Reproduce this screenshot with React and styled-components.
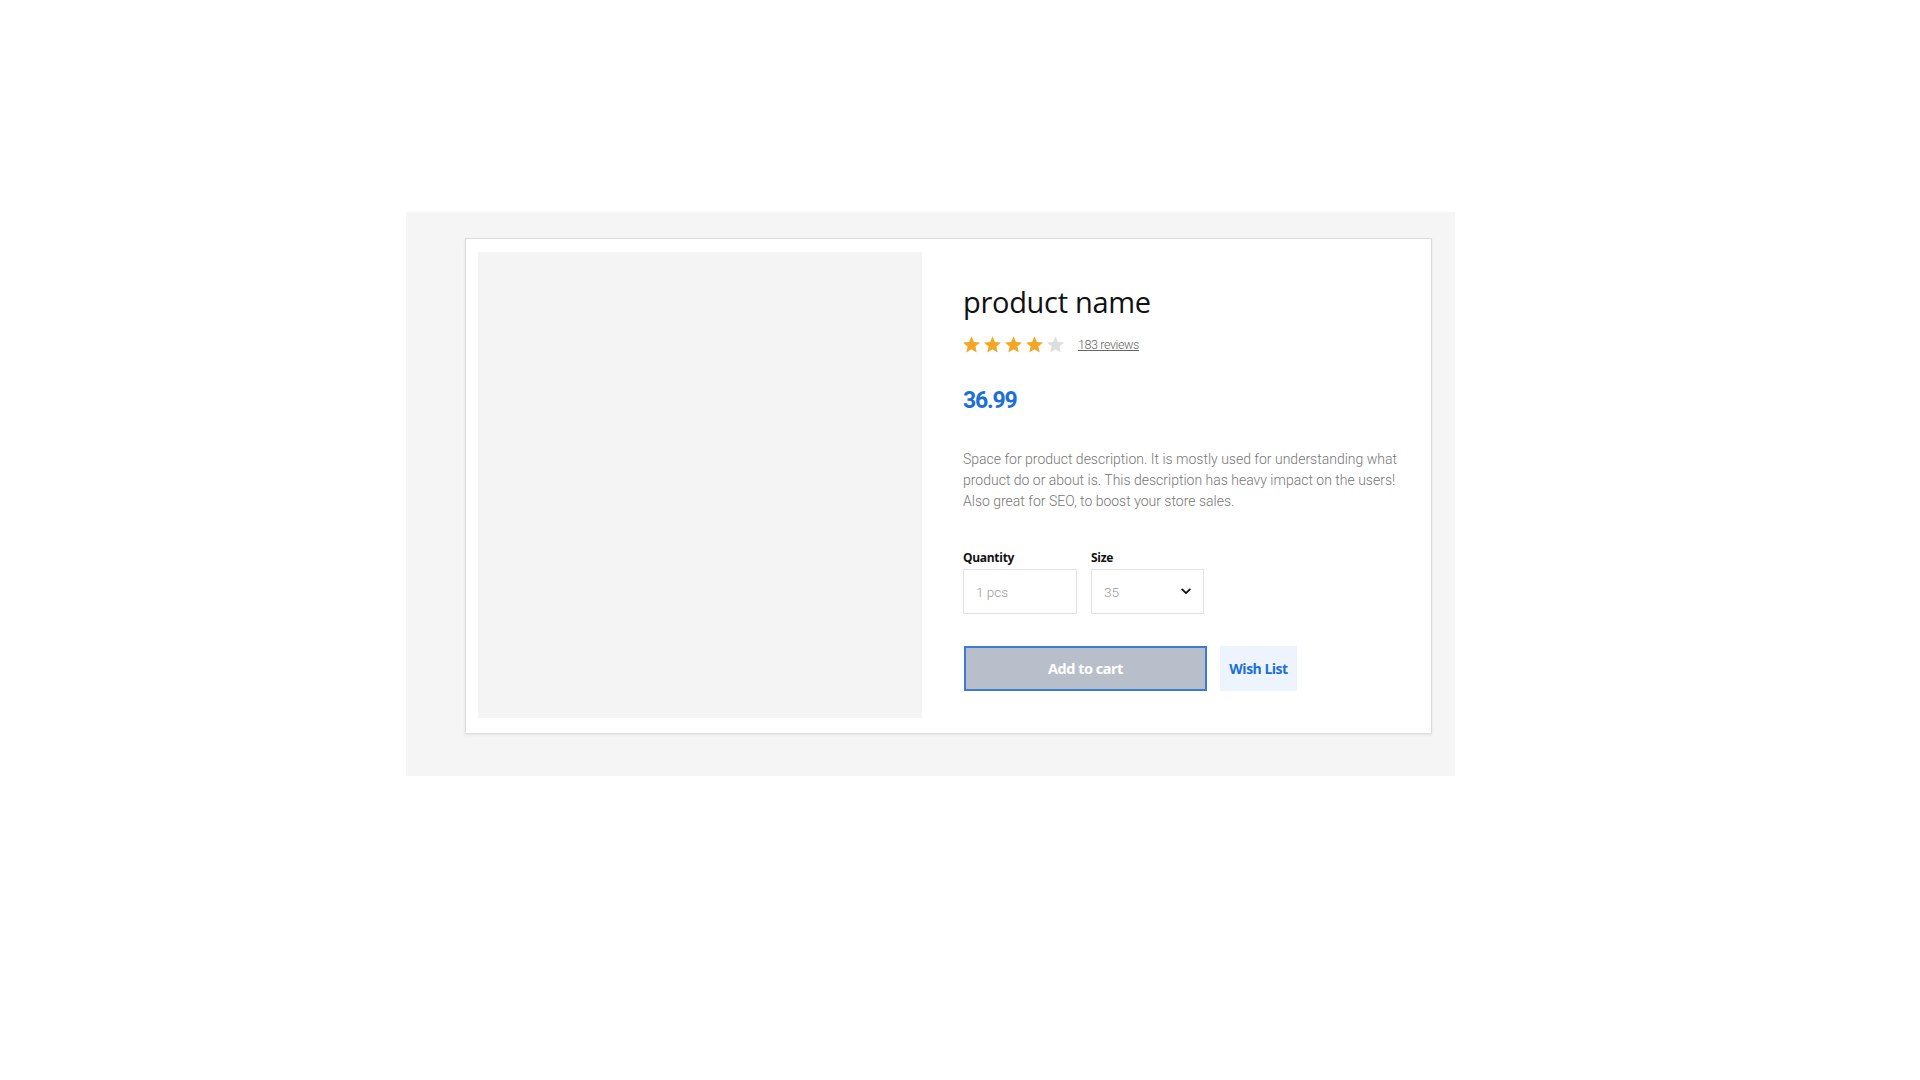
import React from "react";
import styled, { createGlobalStyle } from "styled-components";

const GlobalStyle = createGlobalStyle`
  html, body { margin: 0; padding: 0; background: #ffffff; }
  body { font-family: "Open Sans", "Liberation Sans", sans-serif; }
  * { box-sizing: border-box; }
`;

const Page = styled.div`
  padding: 212px 0 0 406px;
`;

const Frame = styled.section`
  width: 1049px;
  height: 564px;
  background: #f5f5f5;
  padding: 26px 23px 0 59px;
`;

const Card = styled.article`
  width: 967px;
  height: 496px;
  background: #ffffff;
  border: 1px solid #dcdcdc;
  box-shadow: 0 1px 3px rgba(0, 0, 0, 0.07);
  padding: 13px 12px 14px;
  display: flex;
`;

const ImageBox = styled.div`
  width: 444px;
  height: 466px;
  flex: none;
  background: #f4f4f4;
`;

const Info = styled.div`
  flex: 1;
  padding-left: 41px;
  display: flex;
  flex-direction: column;
  align-items: flex-start;
`;

const Title = styled.h1`
  margin: 32px 0 0;
  font-family: "Open Sans", sans-serif;
  font-weight: 500;
  font-size: 29px;
  line-height: 36px;
  color: #111111;
  letter-spacing: -0.3px;
`;

const RatingRow = styled.div`
  margin-top: 16px;
  display: flex;
  align-items: center;
  height: 17px;
`;

const Stars = styled.div`
  display: flex;
  gap: 4px;
  margin-right: 14px;
`;

const Reviews = styled.a`
  font-family: "Roboto", sans-serif;
  font-weight: 300;
  font-size: 12.5px;
  color: #666666;
  text-decoration: underline;
  letter-spacing: -0.4px;
  cursor: pointer;
`;

const Price = styled.div`
  margin-top: 34px;
  font-family: "Roboto", sans-serif;
  font-weight: 700;
  font-size: 23px;
  line-height: 28px;
  letter-spacing: -1.2px;
  color: #1b6fd6;
`;

const Description = styled.p`
  margin: 34px 0 0;
  max-width: 450px;
  font-family: "Roboto", sans-serif;
  font-weight: 300;
  font-size: 14px;
  line-height: 21px;
  color: #767676;
`;

const Fields = styled.div`
  margin-top: 38px;
  display: flex;
  gap: 14px;
`;

const Field = styled.label`
  display: flex;
  flex-direction: column;
  gap: 3px;
`;

const FieldLabel = styled.span`
  font-family: "Open Sans", sans-serif;
  font-weight: 700;
  font-size: 12px;
  line-height: 16px;
  color: #111111;
  letter-spacing: -0.3px;
`;

const InputBox = styled.div`
  width: ${(p) => p.$w}px;
  height: 45px;
  border: 1px solid #e3e3e3;
  background: #ffffff;
  display: flex;
  align-items: center;
  justify-content: space-between;
  padding: 0 12px 0 12px;
  font-family: "Roboto", sans-serif;
  font-weight: 300;
  font-size: 13.5px;
  color: #9a9a9a;
`;

const Actions = styled.div`
  margin-top: 32px;
  display: flex;
  gap: 13px;
  padding-left: 1px;
`;

const Button = styled.button`
  height: 45px;
  width: ${(p) => p.$w}px;
  font-family: "Open Sans", sans-serif;
  font-weight: 700;
  font-size: ${(p) => (p.$primary ? "14.5px" : "14px")};
  letter-spacing: -0.5px;
  cursor: pointer;
  border: ${(p) => (p.$primary ? "2px solid #3a7bd8" : "none")};
  background: ${(p) => (p.$primary ? "#b9bfca" : "#edf4fd")};
  color: ${(p) => (p.$primary ? "#ffffff" : "#1b6fd6")};
  padding: 0;
`;

const Star = ({ filled }) => (
  <svg width="17" height="17" viewBox="2 2 20 19.3" aria-hidden="true">
    <path
      d="M12 17.27L18.18 21l-1.64-7.03L22 9.24l-7.19-.61L12 2 9.19 8.63 2 9.24l5.46 4.73L5.82 21z"
      fill={filled ? "#f5a524" : "#dddddd"}
    />
  </svg>
);

const Chevron = () => (
  <svg width="10" height="7" viewBox="0 0 10 7" aria-hidden="true">
    <path d="M1.2 1.4L5 5.2l3.8-3.8" fill="none" stroke="#111" strokeWidth="1.8" strokeLinecap="round" strokeLinejoin="round" />
  </svg>
);

export default function App() {
  return (
    <>
      <GlobalStyle />
      <Page>
        <Frame>
          <Card>
            <ImageBox />
            <Info>
              <Title>product name</Title>
              <RatingRow>
                <Stars>
                  {[1, 2, 3, 4, 5].map((i) => (
                    <Star key={i} filled={i <= 4} />
                  ))}
                </Stars>
                <Reviews>183 reviews</Reviews>
              </RatingRow>
              <Price>36.99</Price>
              <Description>
                Space for product description. It is mostly used for understanding what product do or about is. This description has heavy impact on the users! Also great for SEO, to boost your store sales.
              </Description>
              <Fields>
                <Field>
                  <FieldLabel>Quantity</FieldLabel>
                  <InputBox $w={114}>1 pcs</InputBox>
                </Field>
                <Field>
                  <FieldLabel>Size</FieldLabel>
                  <InputBox $w={113}>
                    35
                    <Chevron />
                  </InputBox>
                </Field>
              </Fields>
              <Actions>
                <Button $primary $w={243}>Add to cart</Button>
                <Button $w={77}>Wish List</Button>
              </Actions>
            </Info>
          </Card>
        </Frame>
      </Page>
    </>
  );
}
